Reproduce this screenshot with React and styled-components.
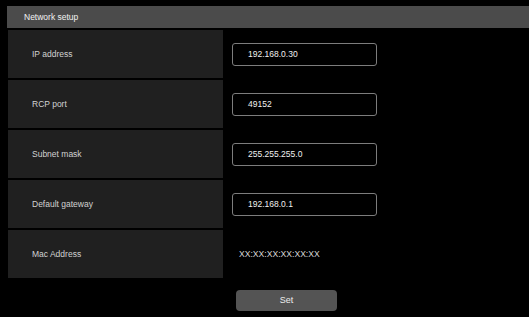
import React from "react";
import styled, { createGlobalStyle } from "styled-components";

const Global = createGlobalStyle`
  html, body { margin: 0; padding: 0; background: #000; }
  body { font-family: "Liberation Sans", Arial, sans-serif; }
`;

const Page = styled.div`
  width: 529px;
  height: 317px;
  box-sizing: border-box;
  padding: 6px 0 0 7px;
  background: #000;
  display: flex;
  flex-direction: column;
  overflow: hidden;
`;

const Header = styled.div`
  height: 22px;
  background: #4b4b4b;
  color: #f2f2f2;
  font-size: 8.5px;
  display: flex;
  align-items: center;
  padding-left: 17px;
`;

const Rows = styled.div`
  margin-top: 2px;
  display: flex;
  flex-direction: column;
  gap: 2px;
`;

const Row = styled.div`
  display: grid;
  grid-template-columns: 215px 1fr;
  column-gap: 9px;
  height: 48px;
  padding-left: 1px;
`;

const Label = styled.div`
  background: #202020;
  color: #d2d2d2;
  font-size: 8.5px;
  display: flex;
  align-items: center;
  padding-left: 24px;
`;

const Cell = styled.div`
  display: flex;
  align-items: center;
`;

const Input = styled.div`
  width: 145px;
  height: 23px;
  box-sizing: border-box;
  border: 1px solid #7d7d7d;
  border-radius: 3px;
  color: #f0f0f0;
  font-size: 8.5px;
  display: flex;
  align-items: center;
  padding-left: 15px;
`;

const Value = styled.div`
  color: #d6d6d6;
  font-size: 8.6px;
  padding-left: 7px;
`;

const Footer = styled.div`
  padding-left: 229px;
  margin-top: 11px;
`;

const Button = styled.button`
  width: 101px;
  height: 21px;
  border: none;
  border-radius: 4px;
  background: #545454;
  color: #ececec;
  font-family: "Liberation Sans", Arial, sans-serif;
  font-size: 9px;
  padding: 0;
`;

const rows = [
  { label: "IP address", value: "192.168.0.30", input: true },
  { label: "RCP port", value: "49152", input: true },
  { label: "Subnet mask", value: "255.255.255.0", input: true },
  { label: "Default gateway", value: "192.168.0.1", input: true },
  { label: "Mac Address", value: "XX:XX:XX:XX:XX:XX", input: false },
];

export default function App() {
  return (
    <>
      <Global />
      <Page>
        <Header>Network setup</Header>
        <Rows>
          {rows.map((r) => (
            <Row key={r.label}>
              <Label>{r.label}</Label>
              <Cell>
                {r.input ? <Input>{r.value}</Input> : <Value>{r.value}</Value>}
              </Cell>
            </Row>
          ))}
        </Rows>
        <Footer>
          <Button>Set</Button>
        </Footer>
      </Page>
    </>
  );
}
